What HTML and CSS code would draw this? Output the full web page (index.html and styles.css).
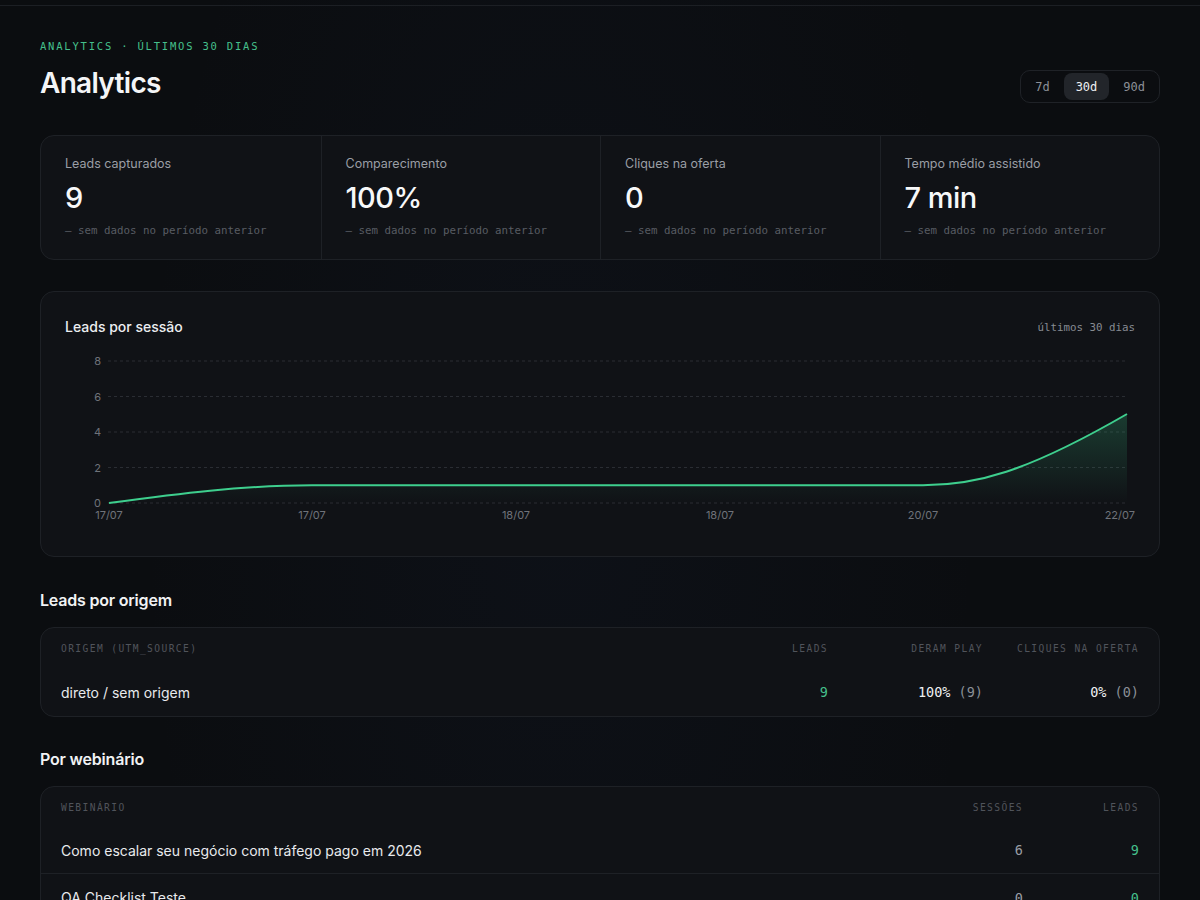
FILE: index.html
```html
<!DOCTYPE html>
<html lang="pt-BR">
<head>
    <meta charset="UTF-8">
    <meta name="viewport" content="width=device-width, initial-scale=1.0">
    <title>Analytics</title>
    <link rel="stylesheet" href="styles.css">
</head>
<body>
    <div class="topbar"></div>

    <main class="page">
        <header class="page-head">
            <div>
                <div class="eyebrow">ANALYTICS · ÚLTIMOS 30 DIAS</div>
                <h1 class="title">Analytics</h1>
            </div>
            <div class="range">
                <button class="range-btn">7d</button>
                <button class="range-btn active">30d</button>
                <button class="range-btn">90d</button>
            </div>
        </header>

        <section class="stats">
            <div class="stat">
                <div class="stat-label">Leads capturados</div>
                <div class="stat-value">9</div>
                <div class="stat-sub">— sem dados no período anterior</div>
            </div>
            <div class="stat">
                <div class="stat-label">Comparecimento</div>
                <div class="stat-value">100%</div>
                <div class="stat-sub">— sem dados no período anterior</div>
            </div>
            <div class="stat">
                <div class="stat-label">Cliques na oferta</div>
                <div class="stat-value">0</div>
                <div class="stat-sub">— sem dados no período anterior</div>
            </div>
            <div class="stat">
                <div class="stat-label">Tempo médio assistido</div>
                <div class="stat-value">7 min</div>
                <div class="stat-sub">— sem dados no período anterior</div>
            </div>
        </section>

        <section class="card chart-card">
            <div class="chart-head">
                <h2 class="chart-title">Leads por sessão</h2>
                <span class="chart-range">últimos 30 dias</span>
            </div>
            <svg class="chart" viewBox="0 0 1070 181" width="1070" height="181">
                <defs>
                    <linearGradient id="fill" x1="0" y1="0" x2="0" y2="1">
                        <stop offset="0" stop-color="#3ecf8e" stop-opacity="0.22"/>
                        <stop offset="1" stop-color="#3ecf8e" stop-opacity="0"/>
                    </linearGradient>
                </defs>
                <g class="grid">
                    <line x1="43" y1="10" x2="1062" y2="10"/>
                    <line x1="43" y1="45.5" x2="1062" y2="45.5"/>
                    <line x1="43" y1="81" x2="1062" y2="81"/>
                    <line x1="43" y1="116.5" x2="1062" y2="116.5"/>
                    <line x1="43" y1="152" x2="1062" y2="152"/>
                </g>
                <g class="ylab">
                    <text x="36" y="14">8</text>
                    <text x="36" y="49.5">6</text>
                    <text x="36" y="85">4</text>
                    <text x="36" y="120.5">2</text>
                    <text x="36" y="156">0</text>
                </g>
                <g class="xlab">
                    <text x="44" y="168">17/07</text>
                    <text x="247" y="168">17/07</text>
                    <text x="451" y="168">18/07</text>
                    <text x="655" y="168">18/07</text>
                    <text x="858" y="168">20/07</text>
                    <text x="1070" y="168" text-anchor="end">22/07</text>
                </g>
                <path class="area" d="M44,152 C111,143 179,134.25 247,134.25 L858,134.25 C910,134.25 960,122 1062,63 L1062,152 L44,152 Z"/>
                <path class="line" d="M44,152 C111,143 179,134.25 247,134.25 L858,134.25 C910,134.25 960,122 1062,63"/>
            </svg>
        </section>

        <section class="block">
            <h2 class="block-title">Leads por origem</h2>
            <div class="card table">
                <div class="row row-head cols-origem">
                    <span>ORIGEM (UTM_SOURCE)</span>
                    <span class="num">LEADS</span>
                    <span class="num">DERAM PLAY</span>
                    <span class="num">CLIQUES NA OFERTA</span>
                </div>
                <div class="row cols-origem">
                    <span class="name">direto / sem origem</span>
                    <span class="num mono green">9</span>
                    <span class="num mono">100% <em>(9)</em></span>
                    <span class="num mono">0% <em>(0)</em></span>
                </div>
            </div>
        </section>

        <section class="block">
            <h2 class="block-title">Por webinário</h2>
            <div class="card table">
                <div class="row row-head cols-web">
                    <span>WEBINÁRIO</span>
                    <span class="num">SESSÕES</span>
                    <span class="num">LEADS</span>
                </div>
                <div class="row cols-web line-below">
                    <span class="name">Como escalar seu negócio com tráfego pago em 2026</span>
                    <span class="num mono grey">6</span>
                    <span class="num mono green">9</span>
                </div>
                <div class="row cols-web">
                    <span class="name">QA Checklist Teste</span>
                    <span class="num mono grey">0</span>
                    <span class="num mono green">0</span>
                </div>
            </div>
        </section>
    </main>
</body>
</html>
```
FILE: styles.css
```css
*{
    box-sizing: border-box;
}
body{
    margin: 0;
    background-color: #0b0d10;
    background-image: radial-gradient(ellipse 420px 900px at 560px 500px, rgba(40, 60, 110, 0.08), transparent);
    color: #eceef1;
    font-family: Inter, "Noto Sans", sans-serif;
    min-height: 900px;
}
.topbar{
    height: 6px;
    border-bottom: 1px solid #1c1f24;
}
.page{
    padding: 32px 40px 40px;
}

/* header */
.page-head{
    display: flex;
    justify-content: space-between;
    align-items: flex-end;
    margin-bottom: 35px;
}
.eyebrow{
    font-family: "DejaVu Sans Mono", monospace;
    font-size: 10.5px;
    line-height: 16px;
    letter-spacing: 1.8px;
    color: #45c08c;
}
.title{
    margin: 12px 0 0;
    font-size: 28px;
    line-height: 34px;
    font-weight: 600;
    letter-spacing: -0.7px;
    color: #f4f5f7;
}
.range{
    display: flex;
    gap: 2px;
    padding: 2px;
    border: 1px solid #1f2227;
    border-radius: 10px;
    margin-bottom: -3px;
}
.range-btn{
    height: 27px;
    padding: 0 12px;
    border: 0;
    border-radius: 8px;
    background: transparent;
    color: #8b9097;
    font-family: "DejaVu Sans Mono", monospace;
    font-size: 12px;
}
.range-btn.active{
    background: #22252a;
    color: #eef0f2;
}

/* cards */
.card{
    background: #101216;
    border: 1px solid #1e2126;
    border-radius: 14px;
}
.stats{
    display: grid;
    grid-template-columns: repeat(4, 1fr);
    background: #101216;
    border: 1px solid #1e2126;
    border-radius: 14px;
    margin-bottom: 31px;
}
.stat{
    padding: 19px 24px 20px;
}
.stat + .stat{
    border-left: 1px solid #1e2126;
}
.stat-label{
    font-size: 12.5px;
    line-height: 18px;
    color: #9a9ea5;
    font-weight: 400;
}
.stat-value{
    margin-top: 8px;
    font-size: 29px;
    line-height: 34px;
    font-weight: 500;
    letter-spacing: -0.5px;
    color: #f7f8f9;
}
.stat-sub{
    margin-top: 8px;
    font-family: "DejaVu Sans Mono", monospace;
    font-size: 10.8px;
    line-height: 16px;
    color: #585c63;
}

/* chart */
.chart-card{
    padding: 25px 24px 24px;
    margin-bottom: 33px;
}
.chart-head{
    display: flex;
    justify-content: space-between;
    align-items: center;
    margin-bottom: 14px;
}
.chart-title{
    margin: 0;
    font-size: 14px;
    line-height: 20px;
    font-weight: 500;
    color: #eceef1;
}
.chart-range{
    font-family: "DejaVu Sans Mono", monospace;
    font-size: 10.8px;
    color: #878b92;
}
.chart{
    display: block;
}
.grid line{
    stroke: #2a2d33;
    stroke-width: 1;
    stroke-dasharray: 3 3;
}
.ylab text{
    fill: #6f737a;
    font-size: 11px;
    text-anchor: end;
    font-family: Inter, sans-serif;
}
.xlab text{
    fill: #6f737a;
    font-size: 11px;
    text-anchor: middle;
    font-family: Inter, sans-serif;
}
.xlab text:last-child{
    text-anchor: end;
}
.area{
    fill: url(#fill);
}
.line{
    fill: none;
    stroke: #3ecf8e;
    stroke-width: 2;
}

/* tables */
.block{
    margin-bottom: 32px;
}
.block-title{
    margin: 0 0 17px;
    font-size: 16px;
    line-height: 20px;
    font-weight: 600;
    letter-spacing: -0.2px;
    color: #f1f2f4;
}
.table{
    padding: 0 20px;
}
.row{
    display: grid;
    align-items: center;
    height: 47px;
}
.row-head{
    height: 40px;
    padding-top: 1px;
    font-family: "DejaVu Sans Mono", monospace;
    font-size: 9.6px;
    letter-spacing: 1.4px;
    color: #50545b;
}
.cols-origem{
    grid-template-columns: 1fr 150px 155px 156px;
}
.cols-origem + .cols-origem{
    height: 48px;
}
.cols-web{
    grid-template-columns: 1fr 150px 116px;
}
.line-below{
    border-bottom: 1px solid #1e2126;
    margin: 0 -20px;
    padding: 0 20px;
}
.num{
    text-align: right;
}
.name{
    font-size: 14px;
    color: #e8eaed;
}
.mono{
    font-family: "DejaVu Sans Mono", monospace;
    font-size: 13.5px;
    color: #eef0f2;
}
.mono em{
    font-style: normal;
    color: #8b9097;
}
.green{
    color: #45c08c;
}
.grey{
    color: #9a9ea5;
}
```
